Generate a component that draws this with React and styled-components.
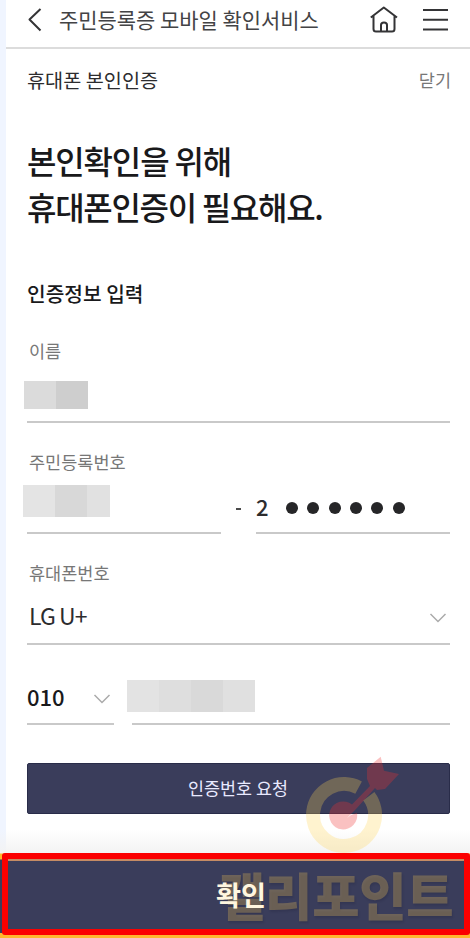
import React from "react";
import styled, { createGlobalStyle } from "styled-components";

const Global = createGlobalStyle`
  * { box-sizing: border-box; }
  body { margin: 0; background: #fff; font-family: "Noto Sans CJK KR", sans-serif; color: #2c2c2e; }
  button { border: 0; padding: 0; background: none; font: inherit; color: inherit; }
  h1, h2, p { margin: 0; font-weight: inherit; }
`;

const Screen = styled.div`
  position: relative;
  width: 470px;
  height: 938px;
  overflow: hidden;
  display: flex;
  flex-direction: column;
  background: linear-gradient(90deg, #f0f5ff 6px, #fff 6px);
`;

const TopBar = styled.header`
  height: 49px;
  flex: none;
  display: flex;
  align-items: flex-start;
  border-bottom: 2px solid #dcdcdc;
  margin-left: 6px;
  padding: 0 22px 0 20px;
`;

const Label = styled.span`
  display: block;
  white-space: nowrap;
  font-size: ${(p) => p.$size}px;
  line-height: ${(p) => p.$line || 26}px;
  font-weight: ${(p) => p.$weight || 400};
  letter-spacing: ${(p) => p.$track || 0}px;
  color: ${(p) => p.$color || "#2c2c2e"};
`;

const PageTitle = styled(Label)`
  margin: 6px 0 0 17px;
  flex: 1;
`;

const BarIcon = styled.svg`
  flex: none;
  fill: none;
  stroke: #343436;
  stroke-width: 2;
  stroke-linejoin: round;
  margin: ${(p) => p.$margin};
`;

const Content = styled.main`
  flex: 1;
  display: flex;
  flex-direction: column;
  padding: 0 20px 0 27px;
`;

const SubHeader = styled.div`
  display: flex;
  justify-content: space-between;
  padding-top: 18px;
  margin-right: -1px;
`;

const Headline = styled.h1`
  margin-top: 44px;
`;

const SectionTitle = styled.h2`
  margin-top: 51px;
`;

const Field = styled.div`
  height: 84px;
  margin-top: ${(p) => p.$top}px;
`;

const FieldLabel = styled(Label)`
  padding-left: 2px;
`;

const Row = styled.div`
  display: flex;
  align-items: flex-end;
  gap: ${(p) => p.$gap || 0}px;
  margin-top: ${(p) => p.$top || 0}px;
`;

const Line = styled.div`
  width: ${(p) => p.$width}px;
  height: 59px;
  flex: none;
  display: flex;
  align-items: center;
  border-bottom: 2px solid #c9c9c9;
  padding: ${(p) => p.$pad || 0};
  justify-content: ${(p) => (p.$spread ? "space-between" : "flex-start")};
`;

const Mosaic = styled.div`
  display: flex;
  height: ${(p) => p.$height}px;
  margin: ${(p) => p.$margin};
`;

const Tile = styled.span`
  width: ${(p) => p.$width}px;
  background: ${(p) => p.$tone};
`;

const Dash = styled.span`
  width: 5px;
  height: 2px;
  margin: 0 15px 24px 15px;
  background: #4a4a4a;
`;

const Dots = styled.div`
  display: flex;
  gap: 9.3px;
  margin: 3px 0 0 17.5px;
`;

const Dot = styled.span`
  width: 12px;
  height: 12px;
  border-radius: 50%;
  background: #262628;
`;

const Chevron = styled.svg`
  flex: none;
  margin-top: 6px;
  fill: none;
  stroke: #aaa;
  stroke-width: 1.5;
`;

const RequestButton = styled.button`
  height: 51px;
  margin-top: 38px;
  flex: none;
  display: flex;
  justify-content: center;
  padding-right: 1px;
  background: #3a3d5b;
  border: 1px solid #292c49;
  border-radius: 2px;
`;

const Footer = styled.footer`
  height: 109px;
  flex: none;
  padding-top: 24px;
  background: linear-gradient(rgba(243, 243, 243, 0) 0, #f3f3f3 24px, #ffb62e 25px, #ffb62e 30px, #3a3d5b 31px, #3a3d5b 104px, #ffb62e 104px);
`;

const ConfirmButton = styled.button`
  display: flex;
  justify-content: center;
  width: 468px;
  height: 82px;
  margin-left: 2px;
  padding-left: 10px;
  border: 6px solid #fb0000;
  border-radius: 3px;
  background: #3a3d5b;
  box-shadow: inset 0 2px #c58b64;
`;

const ConfirmLabel = styled(Label)`
  position: relative;
  z-index: 1;
`;

const WatermarkIcon = styled.svg`
  position: absolute;
  left: 300px;
  top: 750px;
`;

const WatermarkText = styled.span`
  position: absolute;
  left: 218px;
  top: 862px;
  font-size: 51.5px;
  line-height: 64px;
  letter-spacing: -0.3px;
  font-weight: 900;
  white-space: nowrap;
  color: rgba(255, 208, 90, 0.27);
  text-shadow: 1px 2px 2px rgba(20, 20, 40, 0.15);
`;

const DownArrow = () => (
  <Chevron width="18" height="12" viewBox="0 0 18 12">
    <path d="M1.5 2 9 9.5 16.5 2" />
  </Chevron>
);

function Redacted({ tiles, height, margin }) {
  return (
    <Mosaic $height={height} $margin={margin}>
      {tiles.map(([width, tone], i) => (
        <Tile key={i} $width={width} $tone={tone} />
      ))}
    </Mosaic>
  );
}

export default function App() {
  return (
    <>
      <Global />
      <Screen>
        <TopBar>
          <BarIcon width="16" height="26" viewBox="0 0 16 26" $margin="7px 0 0 0">
            <path d="M14.5 2 3.5 12.5 14.5 23.5" />
          </BarIcon>
          <PageTitle $size={20.95} $color="#434345">주민등록증 모바일 확인서비스</PageTitle>
          <BarIcon width="28" height="28" viewBox="0 0 28 28" $margin="6px 0 0 0">
            <path d="M.8 11.5 13.8 1.5 27 11.5M3.5 9.5V23Q3.5 25.5 6 25.5H22Q24.5 25.5 24.5 23V9.5M11 25V19Q11 16.5 14 16.5T17 19V25" />
          </BarIcon>
          <BarIcon width="25" height="26" viewBox="0 0 25 26" $margin="7px 0 0 25px">
            <path d="M0 3H25M0 12.7H25M0 22.5H25" />
          </BarIcon>
        </TopBar>
        <Content>
          <SubHeader>
            <Label $size={19.7}>휴대폰 본인인증</Label>
            <Label $size={17.5} $color="#777">닫기</Label>
          </SubHeader>
          <Headline>
            <Label $size={32} $track={-1.15} $line={46} $weight={500} $color="#19191b">본인확인을 위해</Label>
            <Label $size={32} $track={-1.3} $line={46} $weight={500} $color="#19191b">휴대폰인증이 필요해요.</Label>
          </Headline>
          <SectionTitle>
            <Label $size={20.3} $weight={500} $color="#19191b">인증정보 입력</Label>
          </SectionTitle>
          <Field $top={32}>
            <FieldLabel $size={17.5} $color="#777">이름</FieldLabel>
            <Line $width={423} $pad="4px 0 0">
              <Redacted height={28} margin="0 0 0 -3px" tiles={[[32, "#dbdbdb"], [32, "#cecece"]]} />
            </Line>
          </Field>
          <Field $top={27}>
            <FieldLabel $size={17.5} $color="#777">주민등록번호</FieldLabel>
            <Row>
              <Line $width={194}>
                <Redacted height={32} margin="0 0 6px -4px" tiles={[[32, "#e4e4e4"], [32, "#d8d8d8"], [23, "#e1e1e1"]]} />
              </Line>
              <Dash />
              <Line $width={194} $pad="5px 0 0 0">
                <Label $size={22} $weight={500}>2</Label>
                <Dots>{[0, 1, 2, 3, 4, 5].map((n) => <Dot key={n} />)}</Dots>
              </Line>
            </Row>
          </Field>
          <Field $top={27}>
            <FieldLabel $size={17.5} $color="#777">휴대폰번호</FieldLabel>
            <Line $width={423} $spread $pad="0 3px 0 2px">
              <Label $size={23} $track={-0.9}>LG U+</Label>
              <DownArrow />
            </Line>
          </Field>
          <Row $top={22} $gap={18}>
            <Line $width={87} $spread $pad="2px 3px 0 0">
              <Label $size={22} $weight={500} $color="#19191b">010</Label>
              <DownArrow />
            </Line>
            <Line $width={318} $pad="2px 0 0">
              <Redacted height={32} margin="0 0 0 -5px" tiles={[[32, "#e3e3e3"], [32, "#dedede"], [32, "#d9d9d9"], [32, "#e0e0e0"]]} />
            </Line>
          </Row>
          <RequestButton>
            <Label $size={17.4} $line={47} $color="#e9eaff">인증번호 요청</Label>
          </RequestButton>
        </Content>
        <Footer>
          <ConfirmButton>
            <ConfirmLabel $size={27.2} $line={70} $weight={700} $color="#fff6df">확인</ConfirmLabel>
          </ConfirmButton>
        </Footer>
        <WatermarkIcon width="105" height="103" viewBox="0 0 105 103">
          <path d="M58.6 37.6A31 31 0 1 0 68.8 46.3" fill="none" stroke="#ffd353" strokeOpacity=".28" strokeWidth="14" />
          <path d="M52 54.5 70 36 67 29V18L80.7 6.7 84 20.7 99 24 85 39 77 40 75 38 56 59 47 68 51 65 57 63A14 14 0 1 1 52 54.5Z" fill="#f03232" fillOpacity=".3" />
        </WatermarkIcon>
        <WatermarkText>캘리포인트</WatermarkText>
      </Screen>
    </>
  );
}
